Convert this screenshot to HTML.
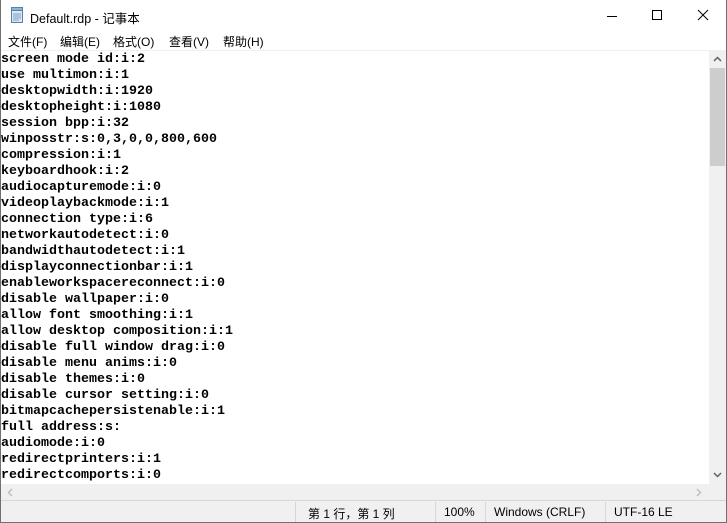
<!DOCTYPE html>
<html><head><meta charset="utf-8"><style>
*{margin:0;padding:0;box-sizing:border-box}
body{width:727px;height:523px;overflow:hidden;background:#fff;font-family:"Liberation Sans","Noto Sans CJK SC",sans-serif;position:relative}
.win{position:absolute;left:0;top:0;width:727px;height:523px;border:1px solid #707070;border-top:none}
.title{position:absolute;left:0;top:0;width:727px;height:31px;background:#fff}
.title .t{position:absolute;left:30px;top:8px;font-size:12.5px;color:#000}
.menu{position:absolute;left:0;top:31px;height:19px;font-size:12px;color:#000}
.menu span{position:absolute;top:2px;white-space:nowrap}
.edit{position:absolute;left:1px;top:50px;width:709px;height:434px;border-top:1px solid #f0f0f0;overflow:hidden}
pre{font-family:"Liberation Mono",monospace;font-weight:bold;font-size:13.33px;line-height:16px;color:#000;margin-top:1px}
.vs{position:absolute;left:709px;top:50px;width:17px;height:434px;background:#f0f0f0}
.thumb{position:absolute;left:1px;top:18px;width:15px;height:98px;background:#cdcdcd}
.hs{position:absolute;left:1px;top:484px;width:708px;height:17px;background:#f0f0f0}
.corner{position:absolute;left:709px;top:484px;width:17px;height:17px;background:#f0f0f0}
.status{position:absolute;left:1px;top:500px;width:725px;height:22px;background:#f0f0f0;border-top:1px solid #d7d7d7;font-size:12px}
.status span{position:absolute;top:4px;white-space:nowrap;color:#000}
.sep{position:absolute;top:1px;width:1px;height:21px;background:#d7d7d7}
</style></head><body>
<div class="title">
<svg style="position:absolute;left:9px;top:7px" width="16" height="17" viewBox="0 0 16 17"><rect x="2.5" y="2.5" width="11" height="13" fill="#dbe8f4" stroke="#5a7fa8"/><rect x="2.5" y="0.5" width="11" height="3" fill="#8db4dc" stroke="#5a7fa8"/><path d="M4 7h8M4 9h8M4 11h8M4 13h6" stroke="#7aa0c6"/></svg>
<div class="t">Default.rdp - 记事本</div>
<svg style="position:absolute;left:606px;top:10px" width="12" height="12"><path d="M1 6.5h10" stroke="#000"/></svg>
<svg style="position:absolute;left:651px;top:9px" width="12" height="12"><rect x="1.5" y="1.5" width="9" height="9" fill="none" stroke="#000"/></svg>
<svg style="position:absolute;left:697px;top:9px" width="12" height="12"><path d="M1 1l10 10M11 1L1 11" stroke="#000"/></svg>
</div>
<div class="menu">
<span style="left:8px">文件(F)</span><span style="left:60px">编辑(E)</span><span style="left:113px">格式(O)</span><span style="left:169px">查看(V)</span><span style="left:223px">帮助(H)</span>
</div>
<div class="edit"><pre>screen mode id:i:2
use multimon:i:1
desktopwidth:i:1920
desktopheight:i:1080
session bpp:i:32
winposstr:s:0,3,0,0,800,600
compression:i:1
keyboardhook:i:2
audiocapturemode:i:0
videoplaybackmode:i:1
connection type:i:6
networkautodetect:i:0
bandwidthautodetect:i:1
displayconnectionbar:i:1
enableworkspacereconnect:i:0
disable wallpaper:i:0
allow font smoothing:i:1
allow desktop composition:i:1
disable full window drag:i:0
disable menu anims:i:0
disable themes:i:0
disable cursor setting:i:0
bitmapcachepersistenable:i:1
full address:s:
audiomode:i:0
redirectprinters:i:1
redirectcomports:i:0</pre></div>
<div class="vs"><svg style="position:absolute;left:4px;top:6px" width="9" height="6"><path d="M1 5l3.5-3.5L8 5" stroke="#606060" stroke-width="1.5" fill="none"/></svg><div class="thumb"></div><svg style="position:absolute;left:4px;top:422px" width="9" height="6"><path d="M1 1l3.5 3.5L8 1" stroke="#606060" stroke-width="1.5" fill="none"/></svg></div>
<div class="hs"><svg style="position:absolute;left:6px;top:4px" width="6" height="9"><path d="M5 1L1.5 4.5 5 8" stroke="#c0c0c0" stroke-width="1.5" fill="none"/></svg><svg style="position:absolute;left:695px;top:4px" width="6" height="9"><path d="M1 1l3.5 3.5L1 8" stroke="#c0c0c0" stroke-width="1.5" fill="none"/></svg></div>
<div class="corner"></div>
<div class="status">
<div class="sep" style="left:294px"></div><div class="sep" style="left:434px"></div><div class="sep" style="left:484px"></div><div class="sep" style="left:604px"></div>
<span style="left:307px">第 1 行，第 1 列</span><span style="left:443px">100%</span><span style="left:493px">Windows (CRLF)</span><span style="left:613px">UTF-16 LE</span>
</div>
<div class="win"></div>
</body></html>
